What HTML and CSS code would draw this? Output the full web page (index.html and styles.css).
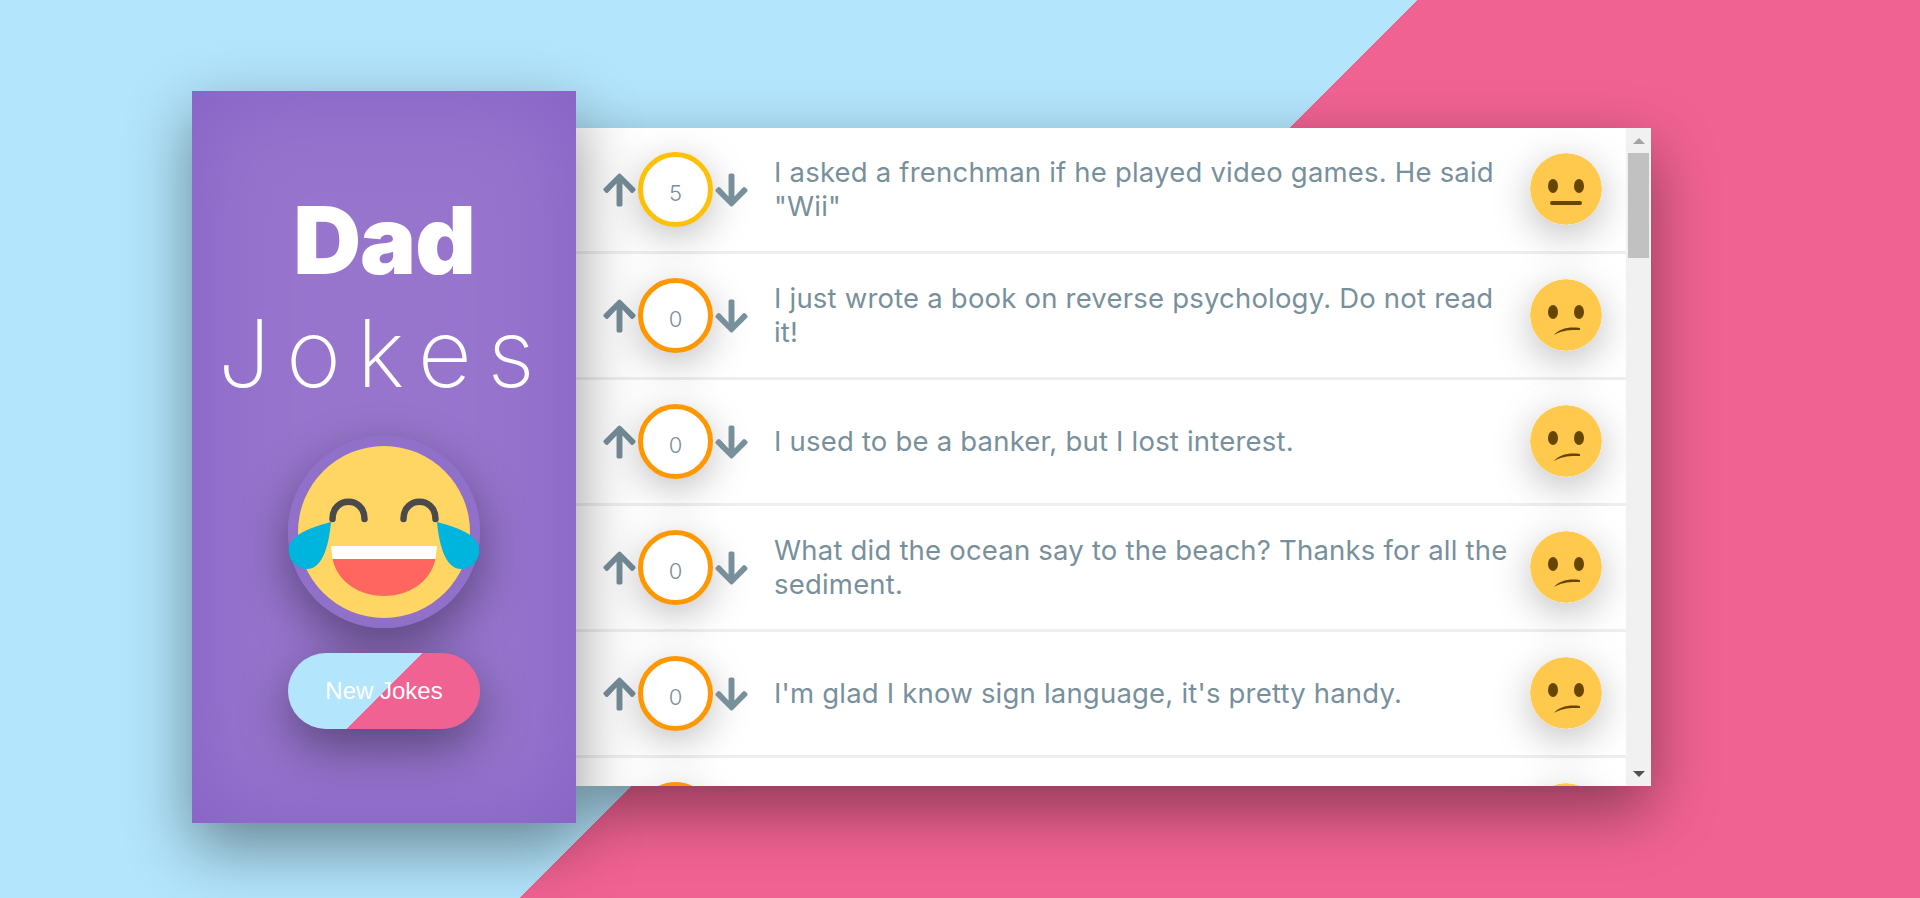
FILE: index.html
```html
<!DOCTYPE html>
<html lang="en">
<head>
    <meta charset="UTF-8">
    <meta name="viewport" content="width=device-width, initial-scale=1.0">
    <title>Dad Jokes</title>
    <link rel="stylesheet" href="styles.css">
</head>
<body>
    <svg class="icon-defs" width="0" height="0" aria-hidden="true">
        <defs>
            <path id="arrow-up" d="M34.9 289.5l-22.2-22.2c-9.4-9.4-9.4-24.6 0-33.9L207 39c9.4-9.4 24.6-9.4 33.9 0l194.3 194.3c9.4 9.4 9.4 24.6 0 33.9L413 289.4c-9.5 9.5-25 9.3-34.3-.4L264 168.6V456c0 13.3-10.7 24-24 24h-32c-13.3 0-24-10.7-24-24V168.6L69.2 289.1c-9.3 9.8-24.8 10-34.3.4z"/>
            <path id="arrow-down" d="M413.1 222.5l22.2 22.2c9.4 9.4 9.4 24.6 0 33.9L241 473c-9.4 9.4-24.6 9.4-33.9 0L12.7 278.6c-9.4-9.4-9.4-24.6 0-33.9l22.2-22.2c9.5-9.5 25-9.3 34.3.4L184 343.4V56c0-13.3 10.7-24 24-24h32c13.3 0 24 10.7 24 24v287.4l114.8-120.5c9.3-9.8 24.8-10 34.3-.4z"/>
            <g id="eyes">
                <ellipse cx="23" cy="33" rx="5" ry="7"/>
                <ellipse cx="49" cy="33" rx="5" ry="7"/>
            </g>
        </defs>
    </svg>

    <div class="jokelist">
        <!-- Sidebar -->
        <aside class="sidebar">
            <h1 class="title"><span class="title-dad">Dad</span> <span class="title-jokes">Jokes</span></h1>
            <svg class="sidebar-emoji" viewBox="0 0 192 192" role="img" aria-label="Laughing emoji">
                <circle cx="96" cy="96" r="96" fill="#9070c9"/>
                <circle cx="96" cy="96" r="86" fill="#ffd664"/>
                <path class="laugh-eye" d="M44.5 83C44.5 60 76.5 60 76.5 83"/>
                <path class="laugh-eye" d="M115.5 83C115.5 60 147.5 60 147.5 83"/>
                <path fill="#fff" d="M43 110H149L147.5 123H44.5Z"/>
                <path fill="#ff6660" d="M44.5 123H147.5C142 148 118 160 96 160C74 160 50 148 44.5 123Z"/>
                <path fill="#00b5dd" d="M43 86C28 90 4 97 1 111C-1 122 7 133 19 133C35 133 41 108 43 86Z"/>
                <path fill="#00b5dd" d="M149 86C164 90 188 97 191 111C193 122 185 133 173 133C157 133 151 108 149 86Z"/>
            </svg>
            <button class="new-jokes">New Jokes</button>
        </aside>

        <!-- Jokes -->
        <div class="panel">
            <div class="jokes">
                <div class="joke">
                    <div class="votes">
                        <svg class="arrow" viewBox="0 0 448 512"><use href="#arrow-up"/></svg>
                        <span class="score score-ok">5</span>
                        <svg class="arrow" viewBox="0 0 448 512"><use href="#arrow-down"/></svg>
                    </div>
                    <div class="joke-text">I asked a frenchman if he played video games. He said "Wii"</div>
                    <svg class="face" viewBox="0 0 72 72">
                        <circle cx="36" cy="36" r="36" fill="#ffc94d"/>
                        <use href="#eyes" fill="#664500"/>
                        <rect x="20" y="48" width="32" height="4" rx="2" fill="#664500"/>
                    </svg>
                </div>
                <div class="joke">
                    <div class="votes">
                        <svg class="arrow" viewBox="0 0 448 512"><use href="#arrow-up"/></svg>
                        <span class="score">0</span>
                        <svg class="arrow" viewBox="0 0 448 512"><use href="#arrow-down"/></svg>
                    </div>
                    <div class="joke-text">I just wrote a book on reverse psychology. Do not read it!</div>
                    <svg class="face" viewBox="0 0 72 72">
                        <circle cx="36" cy="36" r="36" fill="#ffc94d"/>
                        <use href="#eyes" fill="#664500"/>
                        <path fill="#664500" d="M24 56C29 50 38 47.5 50 49L50 51C40 50.5 31 51.5 24 56Z"/>
                    </svg>
                </div>
                <div class="joke">
                    <div class="votes">
                        <svg class="arrow" viewBox="0 0 448 512"><use href="#arrow-up"/></svg>
                        <span class="score">0</span>
                        <svg class="arrow" viewBox="0 0 448 512"><use href="#arrow-down"/></svg>
                    </div>
                    <div class="joke-text">I used to be a banker, but I lost interest.</div>
                    <svg class="face" viewBox="0 0 72 72">
                        <circle cx="36" cy="36" r="36" fill="#ffc94d"/>
                        <use href="#eyes" fill="#664500"/>
                        <path fill="#664500" d="M24 56C29 50 38 47.5 50 49L50 51C40 50.5 31 51.5 24 56Z"/>
                    </svg>
                </div>
                <div class="joke">
                    <div class="votes">
                        <svg class="arrow" viewBox="0 0 448 512"><use href="#arrow-up"/></svg>
                        <span class="score">0</span>
                        <svg class="arrow" viewBox="0 0 448 512"><use href="#arrow-down"/></svg>
                    </div>
                    <div class="joke-text">What did the ocean say to the beach? Thanks for all the sediment.</div>
                    <svg class="face" viewBox="0 0 72 72">
                        <circle cx="36" cy="36" r="36" fill="#ffc94d"/>
                        <use href="#eyes" fill="#664500"/>
                        <path fill="#664500" d="M24 56C29 50 38 47.5 50 49L50 51C40 50.5 31 51.5 24 56Z"/>
                    </svg>
                </div>
                <div class="joke">
                    <div class="votes">
                        <svg class="arrow" viewBox="0 0 448 512"><use href="#arrow-up"/></svg>
                        <span class="score">0</span>
                        <svg class="arrow" viewBox="0 0 448 512"><use href="#arrow-down"/></svg>
                    </div>
                    <div class="joke-text">I'm glad I know sign language, it's pretty handy.</div>
                    <svg class="face" viewBox="0 0 72 72">
                        <circle cx="36" cy="36" r="36" fill="#ffc94d"/>
                        <use href="#eyes" fill="#664500"/>
                        <path fill="#664500" d="M24 56C29 50 38 47.5 50 49L50 51C40 50.5 31 51.5 24 56Z"/>
                    </svg>
                </div>
                <div class="joke">
                    <div class="votes">
                        <svg class="arrow" viewBox="0 0 448 512"><use href="#arrow-up"/></svg>
                        <span class="score"></span>
                        <svg class="arrow" viewBox="0 0 448 512"><use href="#arrow-down"/></svg>
                    </div>
                    <div class="joke-text"></div>
                    <svg class="face" viewBox="0 0 72 72">
                        <circle cx="36" cy="36" r="36" fill="#ffc94d"/>
                    </svg>
                </div>
            </div>
            <!-- Scrollbar -->
            <div class="scrollbar">
                <div class="scroll-btn"><span class="tri-up"></span></div>
                <div class="scroll-track"><div class="scroll-thumb"></div></div>
                <div class="scroll-btn"><span class="tri-down"></span></div>
            </div>
        </div>
    </div>
</body>
</html>
```

FILE: styles.css
```css
/* General Styles */
html, body {
    margin: 0;
    height: 100%;
}
body {
    box-sizing: border-box;
    padding: 16px 0 0 192px;
    display: flex;
    align-items: center;
    overflow: hidden;
    font-family: Inter, "Noto Sans", sans-serif;
    background: linear-gradient(135deg, #b3e5fc calc(50% + 5.7px), #f06292 calc(50% + 5.7px));
}
.icon-defs {
    position: absolute;
}
.jokelist {
    display: flex;
    align-items: center;
    width: 1459px;
    height: 732px;
}

/* Sidebar */
.sidebar {
    position: relative;
    z-index: 2;
    box-sizing: border-box;
    width: 384px;
    height: 100%;
    padding-top: 93px;
    display: flex;
    flex-direction: column;
    align-items: center;
    background: #9775cd;
    color: #fff;
    box-shadow: inset 0 0 100px #8560c5, 0 24px 60px rgba(0, 0, 0, 0.42);
}
.title {
    margin: 0;
    text-align: center;
    font-size: 94px;
    line-height: 113px;
}
.title span {
    display: block;
}
.title-dad {
    font-weight: 900;
    letter-spacing: -1px;
}
.title-jokes {
    font-weight: 200;
    letter-spacing: 15.5px;
}
.sidebar-emoji {
    width: 192px;
    height: 192px;
    margin-top: 26px;
    border-radius: 50%;
    overflow: visible;
    box-shadow: 0 19px 50px rgba(0, 0, 0, 0.4);
}
.laugh-eye {
    fill: none;
    stroke: #4a4a4a;
    stroke-width: 6.5;
    stroke-linecap: round;
}
.new-jokes {
    width: 192px;
    height: 76px;
    margin-top: 25px;
    padding: 0;
    border: none;
    border-radius: 38px;
    font-family: "Liberation Sans", Arial, sans-serif;
    font-size: 24px;
    color: #fff;
    background: linear-gradient(135deg, #b3e5fc 50%, #f06292 50%);
    box-shadow: 0 19px 50px rgba(0, 0, 0, 0.4);
}

/* Jokes panel */
.panel {
    display: flex;
    flex: 1;
    height: 658px;
    background: #fff;
    box-shadow: 0 24px 60px rgba(0, 0, 0, 0.42);
}
.jokes {
    flex: 1;
    height: 100%;
    overflow: hidden;
}
.joke {
    box-sizing: border-box;
    height: 126px;
    padding: 0 24px 0 27px;
    display: flex;
    align-items: center;
    border-bottom: 3px solid #eee;
}
.votes {
    display: flex;
    align-items: center;
    gap: 2px;
    flex-shrink: 0;
}
.arrow {
    width: 33px;
    height: 38px;
    fill: #78909c;
}
.score {
    box-sizing: border-box;
    width: 75px;
    height: 75px;
    padding-top: 7px;
    display: flex;
    align-items: center;
    justify-content: center;
    border: 5px solid #ff9800;
    border-radius: 50%;
    font-size: 22px;
    font-weight: 300;
    color: #78909c;
    box-shadow: 0 10px 38px rgba(0, 0, 0, 0.25);
    background: #fff;
}
.score-ok {
    border-color: #ffc107;
}
.joke-text {
    flex: 1;
    margin: -2px 10px 0 26px;
    font-size: 27.5px;
    letter-spacing: 0.2px;
    line-height: 34px;
    color: #78909c;
}
.face {
    width: 72px;
    height: 72px;
    margin-top: -1px;
    flex-shrink: 0;
    border-radius: 50%;
    box-shadow: 0 10px 38px rgba(0, 0, 0, 0.25);
}

/* Scrollbar */
.scrollbar {
    width: 25px;
    flex-shrink: 0;
    display: flex;
    flex-direction: column;
    background: #f1f1f1;
}
.scroll-btn {
    height: 25px;
    flex-shrink: 0;
    display: flex;
    align-items: center;
    justify-content: center;
}
.tri-up, .tri-down {
    width: 0;
    height: 0;
    border-left: 6px solid transparent;
    border-right: 6px solid transparent;
}
.tri-up {
    border-bottom: 6px solid #a3a3a3;
}
.tri-down {
    border-top: 6px solid #505050;
}
.scroll-track {
    flex: 1;
    padding: 0 2px;
}
.scroll-thumb {
    height: 105px;
    background: #c1c1c1;
}
```
